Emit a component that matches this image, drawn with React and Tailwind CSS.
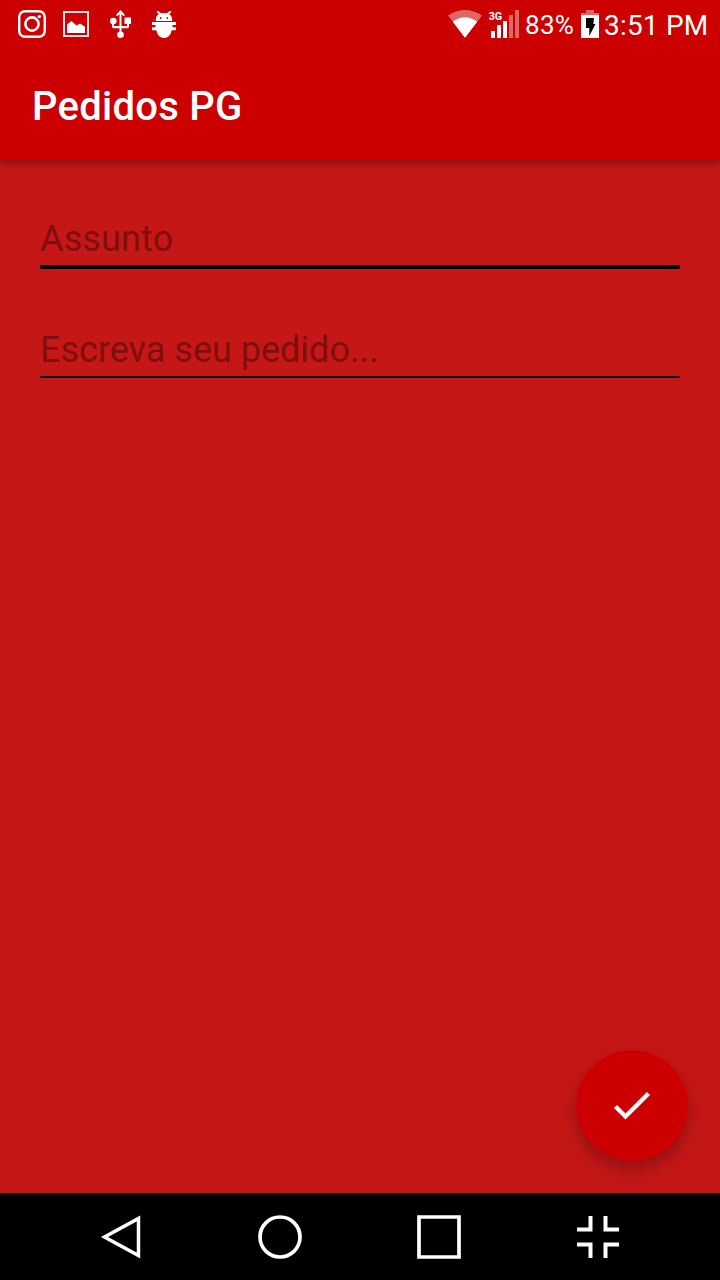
const InstagramIcon = () => (
  <svg className="size-7" viewBox="0 0 28 28" fill="none" stroke="white">
    <rect x="1.2" y="1.2" width="25.6" height="25.6" rx="6" strokeWidth="2.4" />
    <circle cx="14" cy="14" r="6.6" strokeWidth="2.6" />
    <circle cx="21.4" cy="6.6" r="1.7" fill="white" stroke="none" />
  </svg>
);

const PictureIcon = () => (
  <svg className="size-7" viewBox="0 0 28 28">
    <rect x="2" y="2" width="24" height="24" fill="none" stroke="white" strokeOpacity=".87" strokeWidth="2" />
    <path d="M5 23v-8.500l4.500-3.500 5 4.500 3.500-2 5 3.200V23z" fill="white" />
  </svg>
);

const UsbIcon = () => (
  <svg className="size-7" viewBox="0 0 28 28" fill="white">
    <path d="M14.500 0 19 5l-1.300 1.200-2.200-2.200v12H21v-2h-2.500V7.500H25V14h-2v2.500q0 1.700-1.700 1.700h-5.800v4h-2v-4H7.700Q6 18.200 6 16.500v-2.500h2v2h5.500V4L11.300 6.200 10 5z" />
    <circle cx="7.300" cy="11" r="3.300" />
    <circle cx="14.500" cy="24.700" r="3.300" />
  </svg>
);

const BugIcon = () => (
  <svg className="size-7" viewBox="0 0 28 28" fill="white">
    <path d="M5.800 11q-.3-5 3-7L6.500 2l1-.9h1L11 3.300q3-.8 6 0l2.500-2.200h1l1 .9-2.300 2q3.300 2 3 7z" />
    <path d="M2 12h24v3h-3.500v2.200H26v3h-4.300Q20 28 14 28T6.300 20.200H2v-3h3.500V15H2z" />
    <circle cx="10.700" cy="8" r=".9" fill="#cc0000" />
    <circle cx="17.300" cy="8" r=".9" fill="#cc0000" />
  </svg>
);

const WifiIcon = () => (
  <svg className="h-7 w-[34px]" viewBox="0 0 34 28" fill="white">
    <path d="M0 5.500Q17-5.500 34 5.500L17 27.700z" fillOpacity=".4" />
    <path d="M4.800 11.800Q17 2.500 29.200 11.800L17 27.700z" />
  </svg>
);

const SignalIcon = () => (
  <svg className="ml-1.5 h-7 w-[31px]" viewBox="0 0 31 28" fill="white">
    <text x="0.700" y="9.700" fontSize="11.500" fontWeight="700" fontFamily="Roboto, sans-serif" textLength="13.500" lengthAdjust="spacingAndGlyphs">3G</text>
    <path d="M3 21h4v7H3zM9 15h4v13H9zM15 11h4v17h-4z" />
    <path d="M21 5h4v23h-4zM27 0h4v28h-4z" fillOpacity=".4" />
  </svg>
);

const BatteryIcon = () => (
  <svg className="h-7 w-[18px]" viewBox="0 0 18 28">
    <path d="M5 0h8v3h5v2H0V3h5z" fill="white" fillOpacity=".4" />
    <path d="M0 5h18v23H0z" fill="white" />
    <path d="M5 8h8l-.7 6H14.500L8.300 26v-8H5z" fill="black" />
  </svg>
);

function StatusBar() {
  return (
    <div className="flex h-12 items-center justify-between pl-[18px] text-white">
      <div className="flex gap-4">
        <InstagramIcon />
        <PictureIcon />
        <UsbIcon />
        <BugIcon />
      </div>
      <div className="flex h-full items-center whitespace-nowrap">
        <WifiIcon />
        <SignalIcon />
        <span className="ml-1.5 w-14 pt-[2px] text-[26px] leading-7 tracking-[0.3px]">83%</span>
        <BatteryIcon />
        <span className="ml-1 w-[117px] pt-[3px] pl-px text-[28px] leading-8 tracking-[0.2px]">3:51 PM</span>
      </div>
    </div>
  );
}

function NavigationBar() {
  return (
    <nav className="flex h-[87px] items-center justify-between bg-black px-[98px]">
      <svg className="h-12 w-12" viewBox="0 0 48 48" fill="none" stroke="white" strokeWidth="3.500">
        <path d="M40.500 5.500v37L6.500 24z" />
      </svg>
      <svg className="h-12 w-12" viewBox="0 0 48 48" fill="none" stroke="white" strokeWidth="3.700">
        <circle cx="23" cy="24" r="20" />
      </svg>
      <svg className="h-12 w-12" viewBox="0 0 48 48" fill="none" stroke="white" strokeWidth="3.700">
        <path d="M4 4h40v40H4z" />
      </svg>
      <svg className="h-12 w-12" viewBox="0 0 48 48" fill="none" stroke="white" strokeWidth="4">
        <path d="M3 16.500h13.500V3M31.500 3v13.500H45M3 31.500h13.500V45M31.500 45V31.500H45" />
      </svg>
    </nav>
  );
}

export default function App() {
  return (
    <div className="flex h-[1280px] w-[720px] flex-col overflow-hidden bg-[#c61717] font-['Roboto',sans-serif]">
      <header className="z-10 h-40 shrink-0 bg-[#cc0000] shadow-[0_3px_8px_rgba(0,0,0,0.35)]">
        <StatusBar />
        <div className="flex h-28 items-center px-8 pt-1.5">
          <h1 className="text-[40px] leading-[48px] font-medium tracking-[0.25px] text-white">Pedidos PG</h1>
        </div>
      </header>
      <main className="flex flex-1 flex-col px-10 pt-[54px]">
        <input
          aria-label="Assunto"
          placeholder="Assunto"
          className="h-[55px] border-b-4 border-black pb-0.5 text-[36px] leading-[42px] text-black outline-none placeholder:tracking-[0.15px] placeholder:text-[#7f0f0f]"
        />
        <input
          aria-label="Pedido"
          placeholder="Escreva seu pedido..."
          className="mt-[56px] h-[53px] border-b-2 border-black pb-0.5 text-[36px] leading-[42px] text-black outline-none placeholder:text-[#7f0f0f]"
        />
        <button
          aria-label="Enviar"
          className="mt-auto mr-[-8px] mb-8 flex size-28 items-center justify-center self-end rounded-full bg-[#cc0000] shadow-[0_8px_18px_rgba(0,0,0,0.28),inset_0_1px_0_rgba(255,255,255,0.08)]"
        >
          <svg className="size-12" viewBox="0 0 48 48" fill="none" stroke="white" strokeWidth="4.300">
            <path d="m7.500 25.500 10 10L40.500 12.500" />
          </svg>
        </button>
      </main>
      <NavigationBar />
    </div>
  );
}
